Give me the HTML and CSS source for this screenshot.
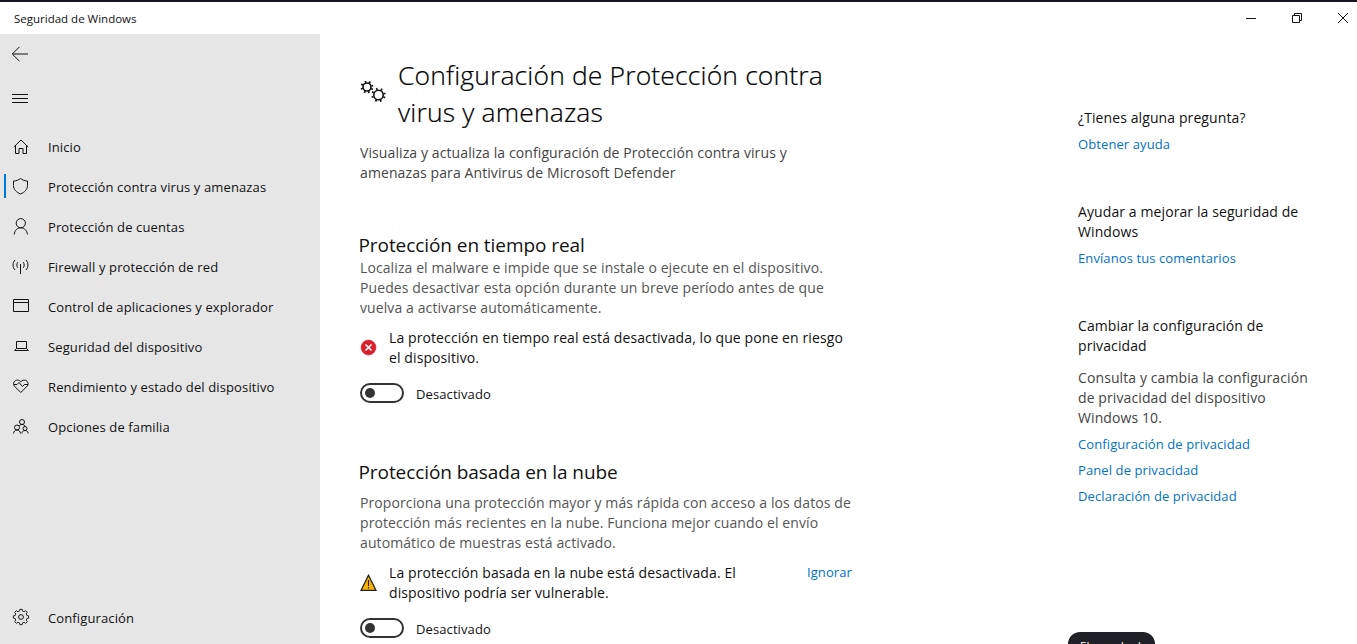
FILE: index.html
```html
<!DOCTYPE html>
<html lang="es">
<head>
<meta charset="utf-8">
<title>Seguridad de Windows</title>
<link rel="stylesheet" href="styles.css">
</head>
<body>
<div class="window">
  <header class="titlebar">
    <span class="app-name">Seguridad de Windows</span>
    <div class="controls">
      <svg width="46" height="32" viewBox="0 0 46 32"><path d="M18 16.500h10" /></svg>
      <svg width="46" height="32" viewBox="0 0 46 32"><path d="M18.500 13.500h7v7h-7zM20.500 13.500v-2h7v7h-2" /></svg>
      <svg width="46" height="32" viewBox="0 0 46 32"><path d="M18 11l10 10M28 11l-10 10" /></svg>
    </div>
  </header>
  <div class="body">
    <nav class="sidebar">
      <div class="tool back"><svg class="icon" viewBox="0 0 20 20"><path d="M2.500 10H18M9.500 2.800L2.300 10l7.200 7.200" /></svg></div>
      <div class="tool menu"><svg class="icon" viewBox="0 0 20 20"><path d="M2 5.500h16M2 9.500h16M2 13.500h16" /></svg></div>
      <ul class="nav">
        <li><svg class="icon" viewBox="0 0 20 20"><path d="M3.800 10L11 3l7.200 7M5.500 8.500v8h3.500v-5h4v5h3.500v-8" /></svg><span>Inicio</span></li>
        <li class="active"><svg class="icon" viewBox="0 0 20 20"><path d="M10.500 1.500C8.500 3 6 4 3.500 4v4.500c0 4 2.800 6.700 7 8.500 4.200-1.800 7-4.500 7-8.500V4C15 4 12.500 3 10.500 1.500z" /></svg><span>Protección contra virus y amenazas</span></li>
        <li><svg class="icon" viewBox="0 0 20 20"><circle cx="10.800" cy="6.200" r="4.600" /><path d="M4.200 17.500c.3-4 3-6.700 6.600-6.700s6.300 2.700 6.600 6.700" /></svg><span>Protección de cuentas</span></li>
        <li><svg class="icon" viewBox="0 0 20 20"><path d="M10.500 7v10M7.800 5.200c-1.300 1.600-1.300 4 0 5.600M13.200 5.200c1.300 1.600 1.300 4 0 5.600M5 3c-2.600 2.700-2.600 7.300 0 10M16 3c2.600 2.700 2.600 7.300 0 10" /></svg><span>Firewall y protección de red</span></li>
        <li><svg class="icon" viewBox="0 0 20 20"><path d="M3.500 2.500h15v12h-15zM3.500 5.500h15" /></svg><span>Control de aplicaciones y explorador</span></li>
        <li><svg class="icon" viewBox="0 0 20 20"><path d="M6.500 4.500h10v7h-10zM6.500 11.500L4.500 13.500h14l-2-2" /></svg><span>Seguridad del dispositivo</span></li>
        <li><svg class="icon" viewBox="0 0 20 20"><path d="M10.800 15.500L4.300 9C1.500 5.500 6.800.300 10.800 4.800 14.800.300 20.100 5.500 17.300 9zM4 7.500h3l2-2 3.500 4 2-2H18" /></svg><span>Rendimiento y estado del dispositivo</span></li>
        <li><svg class="icon" viewBox="0 0 20 20"><circle cx="12" cy="5" r="2.500" /><circle cx="7" cy="10.500" r="2.500" /><circle cx="15" cy="11.500" r="2" /><path d="M3.500 16.500c.2-2 1.500-3.500 3.500-3.500s3.300 1.500 3.500 3.500M11.800 16.500c.2-1.800 1.300-3 3.200-3s3 1.200 3.200 3M9 9c.6-1 1.500-1.500 3-1.500s2.800.8 3.300 2" /></svg><span>Opciones de familia</span></li>
      </ul>
      <div class="settings"><svg class="icon" viewBox="0 0 20 20"><circle cx="11" cy="9" r="2.400" /><path d="M9.700 2.500h2.600l.4 2 1.700.7 1.800-1.200 1.800 1.800-1.200 1.800.7 1.700 2 .4v2.600l-2 .4-.7 1.700 1.200 1.800-1.800 1.800-1.800-1.200-1.700.7-.4 2H9.700l-.4-2-1.700-.7-1.800 1.200L4 16.200l1.200-1.800-.7-1.700-2-.4V9.700l2-.4.7-1.700L4 5.800 5.800 4l1.800 1.200 1.700-.7z" transform="translate(1.100 -.9) scale(.9)" /></svg><span>Configuración</span></div>
    </nav>
    <main class="content">
      <div class="heading">
        <svg class="gears" width="28" height="28" viewBox="0 0 28 28">
          <circle cx="7" cy="9" r="4" /><circle class="teeth" cx="7" cy="9" r="5.400" stroke-dasharray="1.600 2.641" stroke-dashoffset="-1.300" />
          <circle cx="18.500" cy="17" r="4.700" /><circle class="teeth" cx="18.500" cy="17" r="6.200" stroke-dasharray="1.600 3.269" stroke-dashoffset="-1.600" />
        </svg>
        <h1>Configuración de Protección contra<br>virus y amenazas</h1>
      </div>
      <p class="intro">Visualiza y actualiza la configuración de Protección contra virus y<br>amenazas para Antivirus de Microsoft Defender</p>
      <section class="realtime">
        <h2>Protección en tiempo real</h2>
        <p class="desc">Localiza el malware e impide que se instale o ejecute en el dispositivo.<br>Puedes desactivar esta opción durante un breve período antes de que<br>vuelva a activarse automáticamente.</p>
        <div class="alert">
          <svg width="17" height="17" viewBox="0 0 17 17"><circle cx="8.500" cy="8.500" r="7.500" fill="#d9202c" stroke="#d9202c" stroke-width=".5" /><path d="M5.500 5.500l6 6M11.500 5.500l-6 6" stroke="#fff" stroke-width="1.600" /></svg>
          <p>La protección en tiempo real está desactivada, lo que pone en riesgo<br>el dispositivo.</p>
        </div>
        <div class="toggle"><i class="switch"></i><span>Desactivado</span></div>
      </section>
      <section class="cloud">
        <h2>Protección basada en la nube</h2>
        <p class="desc">Proporciona una protección mayor y más rápida con acceso a los datos de<br>protección más recientes en la nube. Funciona mejor cuando el envío<br>automático de muestras está activado.</p>
        <div class="alert">
          <svg width="17" height="17" viewBox="0 0 17 17"><path d="M8.500 1.300L16 16.500H1z" fill="#fdb409" stroke="#222" stroke-width="1.300" /><path d="M8.500 6v6M8.500 13v1.500" stroke="#222" stroke-width="1.200" /></svg>
          <p>La protección basada en la nube está desactivada. El<br>dispositivo podría ser vulnerable.</p>
          <a class="dismiss">Ignorar</a>
        </div>
        <div class="toggle"><i class="switch"></i><span>Desactivado</span></div>
      </section>
    </main>
    <aside class="help">
      <section><h3>¿Tienes alguna pregunta?</h3><a>Obtener ayuda</a></section>
      <section><h3>Ayudar a mejorar la seguridad de<br>Windows</h3><a>Envíanos tus comentarios</a></section>
      <section><h3>Cambiar la configuración de<br>privacidad</h3><p>Consulta y cambia la configuración<br>de privacidad del dispositivo<br>Windows 10.</p><a>Configuración de privacidad</a><a>Panel de privacidad</a><a>Declaración de privacidad</a></section>
    </aside>
  </div>
  <div class="tooltip">El escudo d</div>
</div>
</body>
</html>
```

FILE: styles.css
```css
* { box-sizing: border-box; margin: 0; padding: 0; }
body { width: 1357px; height: 644px; overflow: hidden; background: #fff; color: #111; font: 14px/20px "Open Sans", "Noto Sans", sans-serif; letter-spacing: .1px; }
.window { position: relative; height: 644px; overflow: hidden; border-top: 2px solid #171321; display: flex; flex-direction: column; }
svg { fill: none; stroke: #111; stroke-width: 1; flex: none; }
a { color: #0073c8; }
.titlebar { height: 32px; flex: none; display: flex; justify-content: space-between; padding-left: 14px; }
.app-name { font-size: 11.500px; line-height: 33px; letter-spacing: 0; }
.controls { display: flex; margin-right: -9px; }
.body { flex: 1; min-height: 0; display: flex; }
.sidebar { width: 320px; flex: none; background: #e6e6e6; display: flex; flex-direction: column; padding-bottom: 6px; }
.icon { width: 20px; height: 20px; }
.tool { padding-left: 10px; height: 20px; }
.back { margin-top: 10px; }
.menu { margin-top: 25px; }
.nav { list-style: none; margin-top: 18px; }
.nav li, .settings { height: 40px; padding-left: 10px; display: flex; align-items: center; gap: 18px; font-size: 13px; letter-spacing: .12px; position: relative; }
.nav .active::before { content: ""; position: absolute; left: 4px; top: 7px; width: 2px; height: 24px; background: #0078d7; }
.settings { margin-top: auto; }
.content { width: 757px; flex: none; padding: 23px 0 0 40px; }
.heading { display: flex; align-items: center; gap: 10px; height: 74px; }
.gears { stroke-width: 1.600; margin-top: -4px; }
.gears .teeth { stroke-width: 2; }
h1 { font-size: 26.500px; font-weight: 300; line-height: 37px; letter-spacing: .14px; color: #000; -webkit-text-stroke: .2px #000; }
.intro { margin-top: 12px; color: #444; }
h2 { font-size: 19px; font-weight: 400; line-height: 26px; margin-left: -1.500px; letter-spacing: -.07px; }
.realtime { margin-top: 49px; }
.desc { color: #555; }
.alert { display: flex; align-items: center; gap: 12px; margin-top: 10px; position: relative; }
.alert svg { margin-top: -2px; }
.dismiss { margin: -22px 0 0 59px; font-size: 13px; }
.toggle { display: flex; align-items: center; gap: 12px; height: 20px; margin-top: 15px; font-size: 13px; }
.toggle span { padding-top: 2px; }
.switch { width: 44px; height: 20px; border: 2px solid #333; border-radius: 10px; display: flex; align-items: center; padding-left: 3px; }
.switch::before { content: ""; width: 10px; height: 10px; border-radius: 50%; background: #333; }
.cloud { margin-top: 56px; }
.cloud .desc { margin-top: 8px; }
.help { flex: none; padding: 74px 0 0 1px; }
.help section { display: flex; flex-direction: column; margin-bottom: 42px; }
.help h3 { font-size: 14px; font-weight: 400; margin-bottom: 6px; }
.help a { font-size: 13px; margin-bottom: 6px; }
.help p { margin: 6px 0; color: #444; }
.tooltip { position: absolute; left: 1068px; top: 630px; width: 87px; height: 30px; border-radius: 12px; background: #202127; color: #fff; font-size: 11.500px; line-height: 28px; padding-left: 12px; letter-spacing: 0; white-space: nowrap; }
```
